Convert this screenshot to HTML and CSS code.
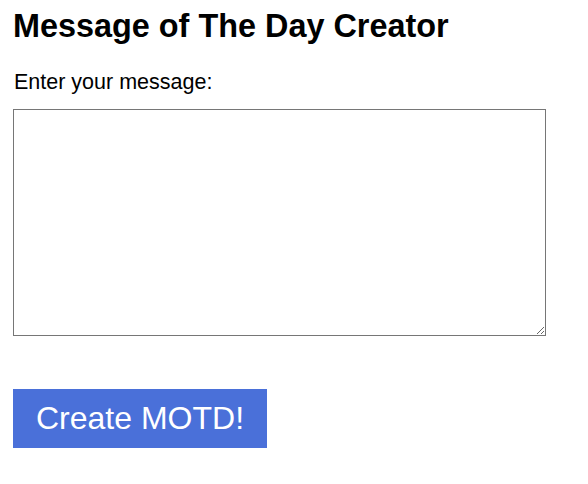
FILE: index.html
```html
<!DOCTYPE html>
<html>
<head>
<meta charset="utf-8">
<link rel="stylesheet" href="styles.css">
</head>
<body>
<div class="page">
  <h1 class="title">Message of The Day Creator</h1>
  <label class="label" for="msg">Enter your message:</label>
  <textarea class="message" id="msg"></textarea>
  <button class="create">Create MOTD!</button>
</div>
</body>
</html>
```
FILE: styles.css
```css
body {
  margin: 0;
  font-family: "Liberation Sans", Arial, sans-serif;
  background: #fff;
  color: #000;
}
.page {
  padding: 8px 13px;
  display: flex;
  flex-direction: column;
  align-items: flex-start;
}
.title {
  font-size: 32.4px;
  font-weight: bold;
  margin: 0;
  line-height: 37px;
}
.label {
  font-size: 21.5px;
  line-height: 24px;
  margin-top: 25px;
  margin-left: 1px;
}
.message {
  box-sizing: border-box;
  width: 533px;
  height: 227px;
  margin-top: 15px;
  border: 1px solid #767676;
}
.create {
  margin-top: 53px;
  width: 254px;
  height: 59px;
  background: #4a70d9;
  color: #fff;
  border: none;
  font-family: "Liberation Sans", Arial, sans-serif;
  font-size: 32px;
  padding: 0;
}
```
